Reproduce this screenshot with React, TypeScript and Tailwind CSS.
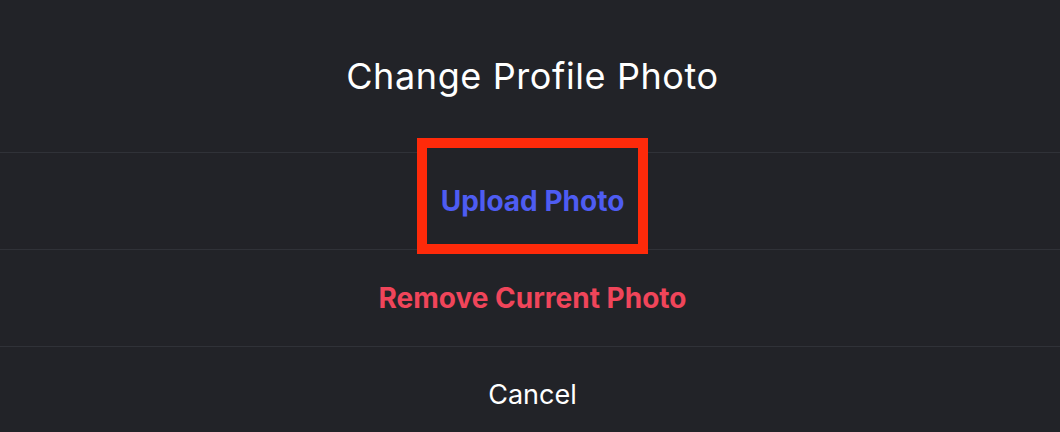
export default function App() {
  return (
    <div className="h-[432px] w-full overflow-hidden bg-[#222328] font-['Inter','Liberation_Sans',sans-serif]">
      <div className="flex h-[152px] items-center justify-center pl-[5px] text-[36px] tracking-[0.6px] text-white">
        Change Profile Photo
      </div>
      <div className="relative flex h-[97px] items-center justify-center border-t border-[#303238] pl-[5px]">
        {/* red highlight box around the upload button */}
        <div className="absolute left-[417px] top-[-15px] h-[116px] w-[231px] border-[10px] border-[#ff2a0a] bg-[#222328]" />
        <span className="relative text-[28px] font-bold text-[#4e5cf2]">
          Upload Photo
        </span>
      </div>
      <div className="flex h-[97px] items-center justify-center border-t border-[#303238] pl-[5px] text-[28px] font-bold text-[#f0455a]">
        Remove Current Photo
      </div>
      <div className="flex h-[97px] items-center justify-center border-t border-[#303238] pl-[5px] text-[27px] text-white">
        Cancel
      </div>
    </div>
  );
}
